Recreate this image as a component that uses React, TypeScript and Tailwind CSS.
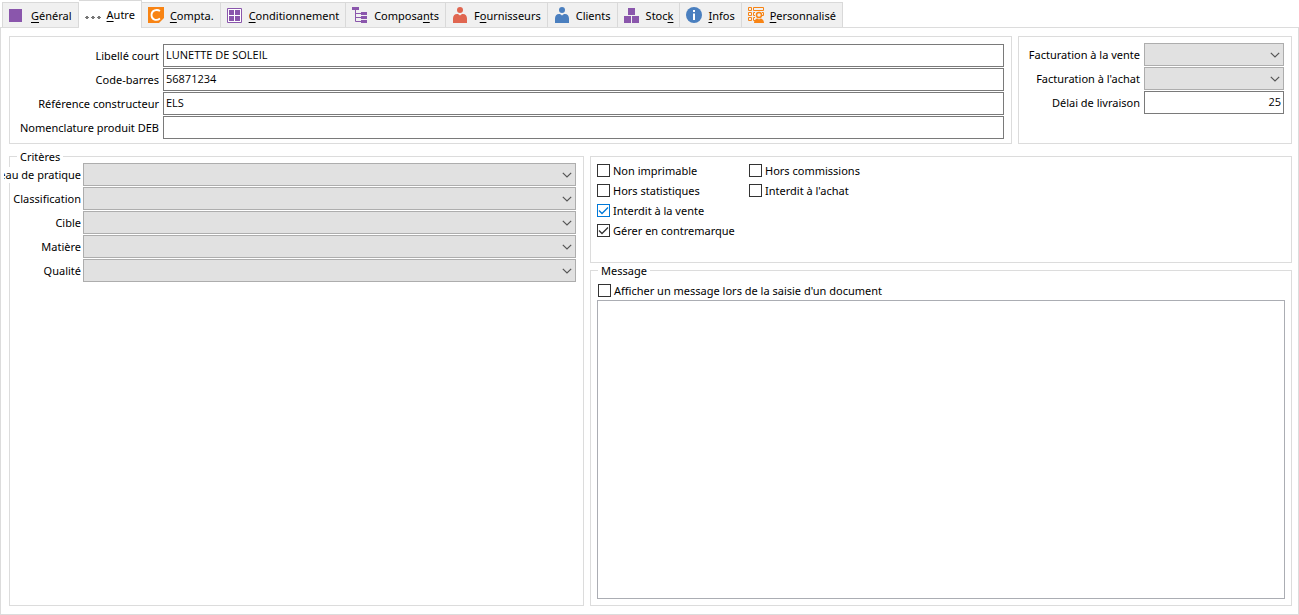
import { useState } from "react";
import type { ReactNode } from "react";
import clsx from "clsx";

const purple = "#8a56ac";
const orange = "#f88414";

const icons: Record<string, ReactNode> = {
  general: <path d="M0 2h13v13H0z" fill={purple} />,
  autre: <path d="M1 10h2v3H1zM0 11h4v1H0zM7 10h2v3H7zM6 11h4v1H6zM13 10h2v3h-2zM12 11h4v1h-4z" fill="#777" />,
  compta: (
    <>
      <path d="M0 0h16v11l-5 5H0z" fill={orange} />
      <path d="M12 4C9 2 3.500 3 3.500 8s5 6 8.500 3.500" fill="none" stroke="#fff" strokeWidth="1.800" />
    </>
  ),
  conditionnement: (
    <>
      <path d="M.5 1.500h14v14H.5z" fill="#fff" stroke={purple} />
      <path d="M2 3h5v5H2zM8 3h5v5H8zM2 9h5v5H2zM8 9h5v5H8z" fill={purple} />
    </>
  ),
  composants: (
    <>
      <path d="M0 0h7v3H0zM9 5h6v3H9zM9 9h6v3H9zM9 13h6v3H9z" fill={purple} />
      <path d="M3.500 3v11.500H9M3.500 6.500H9M3.500 10.500H9" fill="none" stroke={purple} />
    </>
  ),
  fournisseurs: (
    <>
      <circle cx="8" cy="3" r="3" fill="#e06650" />
      <path d="M1 16v-4.500C1 9 2.500 7 5 7h1l2 1.500L10 7h1c2.500 0 4 2 4 4.500V16z" fill="#e06650" />
    </>
  ),
  clients: (
    <>
      <circle cx="8" cy="3" r="3" fill="#4a7fbf" />
      <path d="M1 16v-4.500C1 9 2.500 7 5 7h1l2 1.500L10 7h1c2.500 0 4 2 4 4.500V16z" fill="#4a7fbf" />
    </>
  ),
  stock: <path d="M4 1h7v7H4zM0 9h7v7H0zM8 9h7v7H8z" fill={purple} />,
  infos: (
    <>
      <circle cx="8" cy="8" r="8" fill="#4a7fbf" />
      <path d="M7 3h2v2H7zM7 6.500h2V13H7z" fill="#fff" />
    </>
  ),
  personnalise: (
    <>
      <path
        d="M.5.5h3v3h-3zM5.500.5h10v3h-10zM.5 5.500h3v3h-3zM.5 10.500h3v3h-3zM7 5.500H5.500v3H7M14 5.500h1.500v3H14M7 10.500H5.500v3H7"
        fill="none"
        stroke={orange}
      />
      <circle cx="11" cy="8" r="2.500" fill="#f0f0f0" stroke={orange} strokeWidth="1.500" />
      <path d="M6 16c0-3 2-4.500 3.500-4.500l1.500 1 1.500-1c1.500 0 3.500 1.500 3.500 4.500z" fill={orange} />
    </>
  ),
};

// "_" marks the access key
const tabs = [
  { id: "general", label: "_Général" },
  { id: "autre", label: "_Autre" },
  { id: "compta", label: "_Compta." },
  { id: "conditionnement", label: "_Conditionnement" },
  { id: "composants", label: "Composa_nts" },
  { id: "fournisseurs", label: "F_ournisseurs" },
  { id: "clients", label: "Clients" },
  { id: "stock", label: "Stoc_k" },
  { id: "infos", label: "_Infos" },
  { id: "personnalise", label: "_Personnalisé" },
];

const details = [
  { id: "libelle", label: "Libellé court", value: "LUNETTE DE SOLEIL" },
  { id: "code", label: "Code-barres", value: "56871234" },
  { id: "reference", label: "Référence constructeur", value: "ELS" },
  { id: "nomenclature", label: "Nomenclature produit DEB", value: "" },
];

const criteria = ["Niveau de pratique", "Classification", "Cible", "Matière", "Qualité"];

function TabLabel({ text }: { text: string }) {
  const i = text.indexOf("_");
  if (i < 0) return <span className="pt-0.5">{text}</span>;
  return (
    <span className="pt-0.5">
      {text.slice(0, i)}
      <span className="underline underline-offset-2">{text[i + 1]}</span>
      {text.slice(i + 2)}
    </span>
  );
}

function Select({ id }: { id: string }) {
  return (
    <div className="relative min-w-0 flex-1">
      <select id={id} className="block h-[23px] w-full appearance-none border border-[#adadad] bg-[#e1e1e1] px-1 outline-none" />
      <svg className="pointer-events-none absolute top-2 right-1 h-2 w-2.5" viewBox="0 0 10 8" fill="none" stroke="#555">
        <path d="M.8 1.800L5 6l4.200-4.200" strokeWidth="1.200" />
      </svg>
    </div>
  );
}

function Checkbox({ label, checked = false, focused = false }: { label: string; checked?: boolean; focused?: boolean }) {
  const [on, setOn] = useState(checked);
  return (
    <label className="flex h-5 items-center gap-[3px] pb-px whitespace-nowrap">
      <span className="grid">
        <input
          type="checkbox"
          checked={on}
          onChange={() => setOn(!on)}
          className={clsx(
            "col-start-1 row-start-1 size-[13px] appearance-none border bg-white outline-none",
            focused ? "border-[#0078d7]" : "border-[#333]"
          )}
        />
        {on && (
          <svg
            className={clsx("pointer-events-none col-start-1 row-start-1 size-[13px]", focused ? "text-[#0078d7]" : "text-[#333]")}
            viewBox="0 0 13 13"
            fill="none"
            stroke="currentColor"
          >
            <path d="M2 6.500L5 9.500L11 3.500" strokeWidth="1.300" />
          </svg>
        )}
      </span>
      {label}
    </label>
  );
}

export default function App() {
  const [active, setActive] = useState("autre");

  return (
    <div className="flex min-h-screen flex-col bg-white font-['Noto_Sans','Open_Sans',sans-serif] text-[11px] leading-4 text-black">
      <div role="tablist" className="flex h-[27px] items-end pl-0.5">
        {tabs.map((tab) => {
          const selected = tab.id === active;
          return (
            <button
              key={tab.id}
              type="button"
              role="tab"
              aria-selected={selected}
              onClick={() => setActive(tab.id)}
              className={clsx(
                "flex items-center gap-1.5 border-t border-r border-[#d9d9d9] px-1.5 whitespace-nowrap first:border-l",
                selected ? "relative -mb-px h-7 bg-white pb-0.5" : "h-[25px] bg-[#f0f0f0]"
              )}
            >
              <svg className="size-4 shrink-0" viewBox="0 0 16 16">
                {icons[tab.id]}
              </svg>
              <TabLabel text={tab.label} />
            </button>
          );
        })}
      </div>

      <main className="flex flex-1 flex-col border border-[#dcdcdc] py-2 pr-1.5 pl-2">
        <div className="flex gap-1.5">
          <section className="flex flex-1 flex-col gap-px border border-[#dcdcdc] px-[7px] pt-[7px] pb-1">
            {details.map((field) => (
              <div key={field.id} className="flex items-center gap-1">
                <label htmlFor={field.id} className="flex w-[142px] justify-end whitespace-nowrap">
                  {field.label}
                </label>
                <input
                  id={field.id}
                  defaultValue={field.value}
                  className="h-[23px] min-w-0 flex-1 border border-[#7a7a7a] px-0.5 pb-0.5 font-['Open_Sans',sans-serif] outline-none"
                />
              </div>
            ))}
          </section>

          <section className="flex w-[274px] flex-col gap-px border border-[#dcdcdc] px-[7px] pt-1.5">
            <div className="flex items-center gap-1">
              <label htmlFor="fact-vente" className="flex w-[114px] justify-end whitespace-nowrap">Facturation à la vente</label>
              <Select id="fact-vente" />
            </div>
            <div className="flex items-center gap-1">
              <label htmlFor="fact-achat" className="flex w-[114px] justify-end whitespace-nowrap">Facturation à l'achat</label>
              <Select id="fact-achat" />
            </div>
            <div className="flex items-center gap-1">
              <label htmlFor="delai" className="flex w-[114px] justify-end whitespace-nowrap">Délai de livraison</label>
              <input
                id="delai"
                defaultValue="25"
                className="h-[23px] min-w-0 flex-1 border border-[#7a7a7a] px-0.5 pb-0.5 text-right font-['Open_Sans',sans-serif] outline-none"
              />
            </div>
          </section>
        </div>

        <div className="mt-1.5 grid flex-1 grid-cols-[575fr_702fr] gap-1.5">
          <fieldset className="min-w-0 border border-[#dcdcdc] pr-[7px]">
            <legend className="ml-[7px] px-[3px] leading-[13px]">Critères</legend>
            <div className="-ml-1.5 flex flex-col gap-px">
              {criteria.map((name, i) => (
                <div key={name} className="flex items-center gap-0.5">
                  <label
                    htmlFor={`critere-${i}`}
                    className={clsx("flex w-[77px] justify-end overflow-hidden whitespace-nowrap", i === 0 && "bg-white")}
                  >
                    {name}
                  </label>
                  <Select id={`critere-${i}`} />
                </div>
              ))}
            </div>
          </fieldset>

          <div className="flex flex-col gap-px pt-1.5">
            <section className="grid h-[107px] grid-cols-[152px_1fr] content-start border border-[#dcdcdc] px-1.5 pt-1">
              <Checkbox label="Non imprimable" />
              <Checkbox label="Hors commissions" />
              <Checkbox label="Hors statistiques" />
              <Checkbox label="Interdit à l'achat" />
              <div className="col-span-2">
                <Checkbox label="Interdit à la vente" checked focused />
                <Checkbox label="Gérer en contremarque" checked />
              </div>
            </section>

            <fieldset className="flex min-w-0 flex-1 flex-col border border-[#dcdcdc] px-1.5 pt-1 pb-1.5">
              <legend className="ml-px px-[3px] leading-[13px]">Message</legend>
              <div className="-mb-px pl-px">
                <Checkbox label="Afficher un message lors de la saisie d'un document" />
              </div>
              <textarea aria-label="Message" className="min-h-0 w-full flex-1 resize-none border border-[#abadb3] p-1 outline-none" />
            </fieldset>
          </div>
        </div>
      </main>
    </div>
  );
}
